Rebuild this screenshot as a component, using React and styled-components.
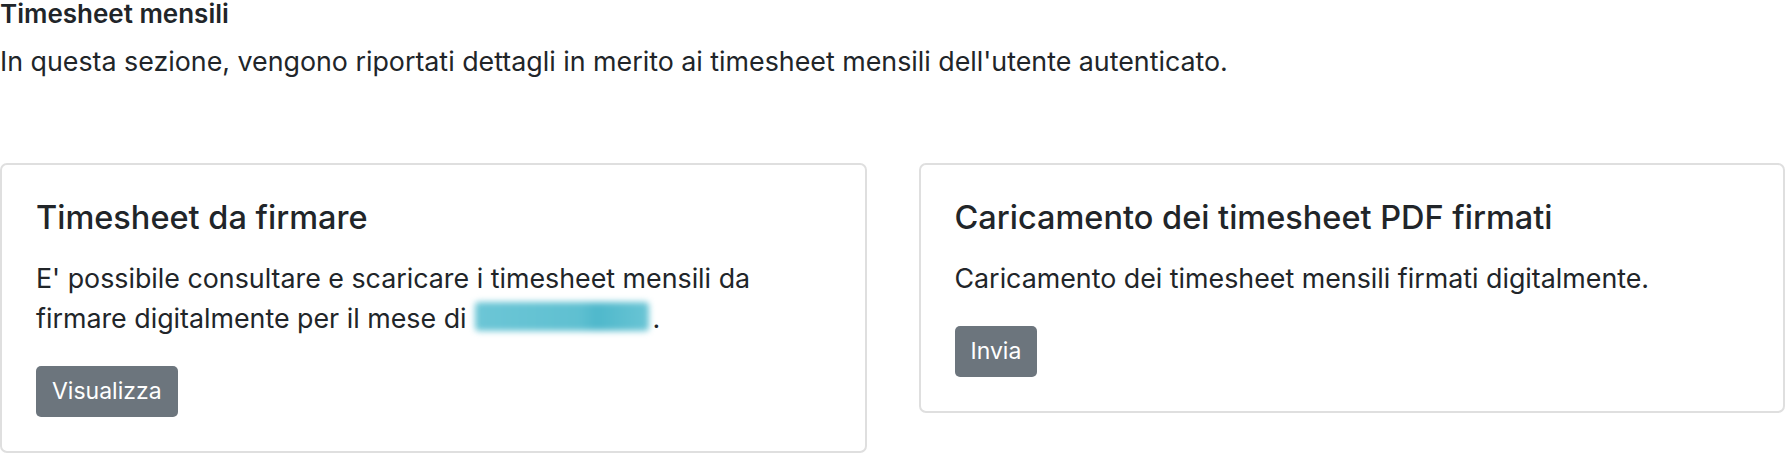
import styled, { createGlobalStyle } from 'styled-components';

const GlobalStyle = createGlobalStyle`
  body {
    margin: 0;
    background: #fff;
    color: #212529;
    font-family: Inter, "Noto Sans", sans-serif;
  }
`;

const Page = styled.div`
  width: 1785px;
`;

const PageTitle = styled.h6`
  margin: 0;
  font-size: 26px;
  font-weight: 600;
  line-height: 24px;
  padding-top: 2px;
`;

const Lead = styled.p`
  margin: 16px 0 82px;
  font-size: 26.8px;
  line-height: 39px;
`;

const CardGrid = styled.div`
  display: grid;
  grid-template-columns: 1fr 1fr;
  gap: 52px;
  align-items: start;
`;

const Card = styled.div`
  border: 2px solid #dfdfdf;
  border-radius: 7px;
  padding: 34px;
  background: #fff;
`;

const CardTitle = styled.h5`
  margin: 0 0 21px;
  font-size: 32.5px;
  font-weight: 500;
  line-height: 38px;
`;

const CardText = styled.p`
  margin: 0 0 28px;
  font-size: 26.8px;
  line-height: 40px;
`;

const Redacted = styled.span`
  display: inline-block;
  width: 174px;
  height: 29px;
  margin: 0 4px 0 8px;
  vertical-align: -3px;
  border-radius: 4px;
  background: linear-gradient(90deg, #6cc6d6 0%, #5fc0d1 60%, #4fb8cb 70%, #6ac5d5 100%);
  filter: blur(3px);
`;

const Button = styled.button`
  display: inline-block;
  height: 51px;
  padding: 0 16px;
  border: none;
  border-radius: 5px;
  background: #6c757d;
  color: #fff;
  font-family: inherit;
  font-size: 23px;
  line-height: 51px;
  cursor: pointer;
`;

export default function App() {
  return (
    <Page>
      <GlobalStyle />
      <PageTitle>Timesheet mensili</PageTitle>
      <Lead>
        In questa sezione, vengono riportati dettagli in merito ai timesheet mensili dell'utente autenticato.
      </Lead>
      <CardGrid>
        <Card>
          <CardTitle>Timesheet da firmare</CardTitle>
          <CardText>
            E' possibile consultare e scaricare i timesheet mensili da firmare digitalmente per il mese di
            <Redacted aria-hidden="true" />.
          </CardText>
          <Button>Visualizza</Button>
        </Card>
        <Card>
          <CardTitle>Caricamento dei timesheet PDF firmati</CardTitle>
          <CardText>Caricamento dei timesheet mensili firmati digitalmente.</CardText>
          <Button>Invia</Button>
        </Card>
      </CardGrid>
    </Page>
  );
}
